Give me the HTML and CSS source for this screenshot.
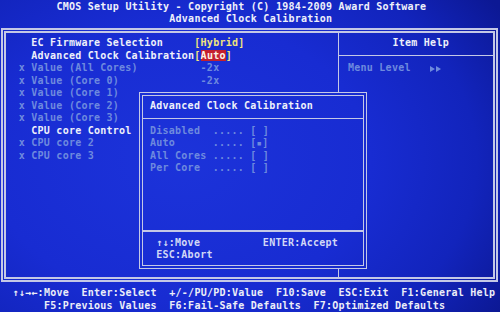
FILE: index.html
```html
<!DOCTYPE html>
<html>
<head>
<meta charset="utf-8">
<title>CMOS Setup Utility</title>
<link rel="stylesheet" href="styles.css">
</head>
<body>
<div class="screen">
  <header class="title">
    <div class="row">         CMOS Setup Utility - Copyright (C) 1984-2009 Award Software</div>
    <div class="row">                           Advanced Clock Calibration</div>
  </header>

  <main class="frame">
    <section class="menu">
      <div class="row">  EC Firmware Selection     <span class="yel">[Hybrid]</span></div>
      <div class="row">  Advanced Clock Calibration<span class="yel">[<span class="sel">Auto</span>]</span></div>
      <div class="row dim">x Value (All Cores)          -2x</div>
      <div class="row dim">x Value (Core 0)             -2x</div>
      <div class="row dim">x Value (Core 1)</div>
      <div class="row dim">x Value (Core 2)</div>
      <div class="row dim">x Value (Core 3)</div>
      <div class="row">  CPU core Control</div>
      <div class="row dim">x CPU core 2</div>
      <div class="row dim">x CPU core 3</div>
    </section>
    <aside class="help">
      <div class="help-head"><div class="row">Item Help</div></div>
      <div class="help-body">
        <div class="row dim level">Menu Level   <svg class="arrows" width="11" height="6" viewBox="0 0 11 6"><path d="M0 0L5 3L0 6Z M6 0L11 3L6 6Z" fill="currentColor"/></svg></div>
      </div>
    </aside>
  </main>

  <footer class="keys">
    <div class="row">  ↑↓→←:Move  Enter:Select  +/-/PU/PD:Value  F10:Save  ESC:Exit  F1:General Help</div>
    <div class="row">       F5:Previous Values  F6:Fail-Safe Defaults  F7:Optimized Defaults</div>
  </footer>

  <div class="popup">
    <div class="row ptext">Advanced Clock Calibration</div>
    <div class="sep"></div>
    <div class="row ptext dim">Disabled  ..... [ ]</div>
    <div class="row ptext dim">Auto      ..... [<span class="dot">▪</span>]</div>
    <div class="row ptext dim">All Cores ..... [ ]</div>
    <div class="row ptext dim">Per Core  ..... [ ]</div>
    <div class="row"></div>
    <div class="row"></div>
    <div class="row"></div>
    <div class="row"></div>
    <div class="sep"></div>
    <div class="row ptext soft"> ↑↓:Move          ENTER:Accept</div>
    <div class="row ptext soft"> ESC:Abort</div>
  </div>
</div>
</body>
</html>
```
FILE: styles.css
```css
html, body {
  margin: 0;
  padding: 0;
  background: #0c1898;
}

.screen {
  position: relative;
  width: 500px;
  height: 312px;
  overflow: hidden;
  font-family: "DejaVu Sans Mono", "Liberation Mono", monospace;
  font-size: 10px;
  font-weight: bold;
  letter-spacing: 0.25px;
  color: #eef0fa;
  background: radial-gradient(ellipse 380px 280px at 180px 160px, #1c33da 0%, #182cd2 50%, #1224bc 78%, #0c1894 100%);
}

.row {
  height: 12.48px;
  line-height: 12.48px;
  white-space: pre;
}

.title {
  height: 24.96px;
  padding-top: 0.5px;
  box-sizing: border-box;
}

.frame {
  display: flex;
  box-sizing: border-box;
  height: 254px;
  margin: 3px 2px 0 1px;
  border: 5px double #c4c8e6;
}

.menu {
  width: 331.5px;
  padding: 4.48px 0 0 12.75px;
  box-sizing: border-box;
}

.help {
  flex: 1;
  border-left: 1.5px solid #c4c8e6;
}

.help-head {
  box-sizing: border-box;
  height: 23.5px;
  padding: 4.48px 0 0 54px;
  border-bottom: 1.5px solid #c4c8e6;
}

.help-body {
  padding: 5.9px 0 0 9.5px;
}

.level {
  display: flex;
  align-items: center;
}

.arrows {
  display: block;
}

.dim {
  color: #6e8ade;
}

.yel {
  color: #f2e47c;
}

.sel {
  background: #c4202e;
  color: #fbf4e6;
}

.keys {
  margin-top: 5.08px;
  color: #eceef8;
}

.popup {
  position: absolute;
  left: 139px;
  top: 91.5px;
  width: 228px;
  height: 177px;
  box-sizing: border-box;
  padding-top: 4.34px;
  border: 4px double #c4c8e6;
  background: radial-gradient(ellipse 380px 280px at 180px 160px, #1c33da 0%, #182cd2 50%, #1224bc 78%, #0c1894 100%) -143px -95.5px / 500px 312px no-repeat;
}

.ptext {
  padding-left: 7px;
}

.sep {
  height: 12.48px;
  display: flex;
  align-items: center;
}

.sep::before {
  content: "";
  flex: 1;
  height: 1.5px;
  background: #c4c8e6;
}

.soft {
  color: #d2d8f6;
}

.dot {
  font-size: 9px;
}
```
